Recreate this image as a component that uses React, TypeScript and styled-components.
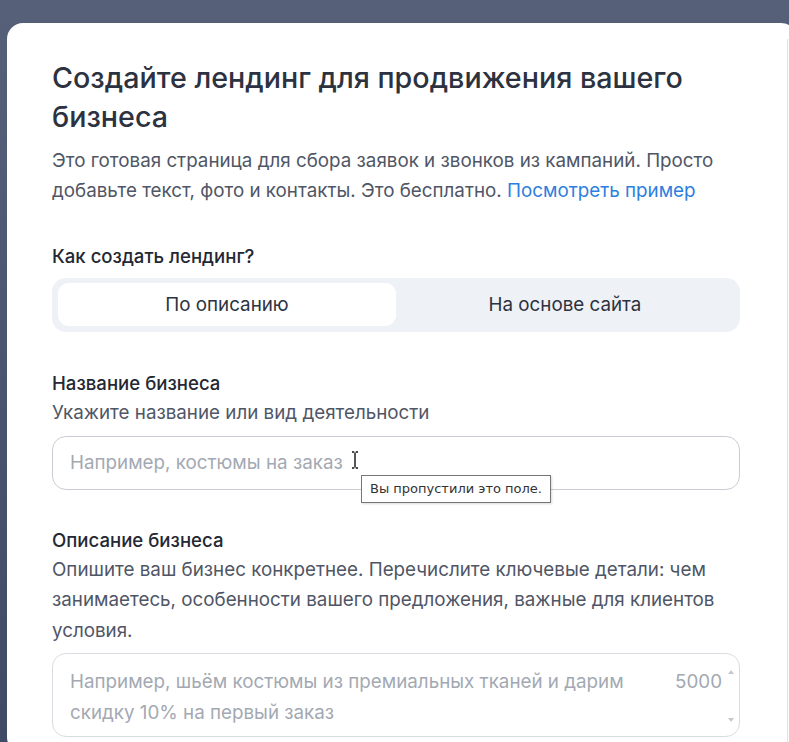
import React from "react";
import styled, { createGlobalStyle } from "styled-components";

const Global = createGlobalStyle`
  html, body { margin: 0; padding: 0; height: 100%; }
  body {
    background: linear-gradient(180deg, #566079 0%, #4c5872 40%, #3f4b64 100%);
    font-family: Inter, "Noto Sans", Arial, sans-serif;
    overflow: hidden;
  }
`;

const Page = styled.div`
  width: 789px;
  height: 742px;
  padding: 23px 0 0 7px;
  box-sizing: border-box;
  overflow: hidden;
`;

const Modal = styled.div`
  position: relative;
  width: 790px;
  height: 730px;
  background: #ffffff;
  border-radius: 16px;
  box-sizing: border-box;
  padding: 35px 0 0 45px;
`;

const ScrollEdge = styled.div`
  position: absolute;
  right: 9px;
  top: 16px;
  bottom: 0;
  width: 1px;
  background: #dfe1e5;
`;

const Content = styled.div`
  width: 688px;
  display: flex;
  flex-direction: column;
`;

const Title = styled.h1`
  margin: 0;
  font-size: 28.7px;
  line-height: 39px;
  font-weight: 500;
  color: #2c3240;
`;

const Lead = styled.p`
  margin: 10px 0 0;
  font-size: 18.8px;
  line-height: 30px;
  color: #4f5665;
`;

const Link = styled.a`
  color: #2d7fdf;
  text-decoration: none;
`;

const Label = styled.div<{ $top: number }>`
  margin-top: ${(p) => p.$top}px;
  font-size: 18.6px;
  line-height: 22px;
  font-weight: 500;
  color: #232833;
`;

const Hint = styled.div`
  margin-top: 4px;
  font-size: 18.8px;
  line-height: 30.5px;
  color: #4f5665;
`;

const Segmented = styled.div`
  margin-top: 11px;
  height: 54px;
  background: #eef1f5;
  border-radius: 14px;
  padding: 6px;
  box-sizing: border-box;
  display: grid;
  grid-template-columns: 338px 1fr;
`;

const Segment = styled.div<{ $active?: boolean }>`
  display: flex;
  align-items: center;
  justify-content: center;
  border-radius: 11px;
  background: ${(p) => (p.$active ? "#ffffff" : "transparent")};
  font-size: 18.8px;
  color: #2c3240;
  height: 43px;
  margin-top: -1px;
`;

const FieldWrap = styled.div`
  position: relative;
  margin-top: 7px;
`;

const Input = styled.div`
  height: 54px;
  border: 1px solid #c9cdd3;
  border-radius: 14px;
  box-sizing: border-box;
  padding: 0 17px;
  display: flex;
  align-items: center;
  font-size: 18.8px;
  color: #a3a9b2;
`;

const Cursor = styled.svg`
  position: absolute;
  left: 299px;
  top: 15px;
`;

const Tooltip = styled.div`
  position: absolute;
  left: 309px;
  top: 39px;
  height: 28px;
  padding: 0 8px;
  box-sizing: border-box;
  border: 1px solid #767676;
  background: #ffffff;
  display: flex;
  align-items: center;
  font-family: "DejaVu Sans", "Liberation Sans", sans-serif;
  font-size: 13px;
  color: #333333;
  box-shadow: 1px 1px 2px rgba(0, 0, 0, 0.15);
  white-space: nowrap;
`;

const TextArea = styled.div`
  position: relative;
  margin-top: 7px;
  height: 84px;
  border: 1px solid #d9dce1;
  border-radius: 14px;
  box-sizing: border-box;
  padding: 12px 90px 0 17px;
  font-size: 18.8px;
  line-height: 31px;
  color: #a3a9b2;
`;

const Counter = styled.span`
  position: absolute;
  right: 17px;
  top: 12px;
  font-size: 18.8px;
  line-height: 31px;
  color: #a3a9b2;
`;

const Arrow = styled.div<{ $down?: boolean }>`
  position: absolute;
  right: 5px;
  ${(p) => (p.$down ? "bottom: 14px;" : "top: 16px;")}
  width: 0;
  height: 0;
  border-left: 3px solid transparent;
  border-right: 3px solid transparent;
  ${(p) =>
    p.$down ? "border-top: 4px solid #c5c9cf;" : "border-bottom: 4px solid #c5c9cf;"}
`;

export default function App() {
  return (
    <Page>
      <Global />
      <Modal>
        <ScrollEdge />
        <Content>
          <Title>Создайте лендинг для продвижения вашего бизнеса</Title>
          <Lead>
            Это готовая страница для сбора заявок и звонков из кампаний. Просто
            добавьте текст, фото и контакты. Это бесплатно.{" "}
            <Link href="#">Посмотреть пример</Link>
          </Lead>

          <Label $top={39}>Как создать лендинг?</Label>
          <Segmented>
            <Segment $active>По описанию</Segment>
            <Segment>На основе сайта</Segment>
          </Segmented>

          <Label $top={40}>Название бизнеса</Label>
          <Hint>Укажите название или вид деятельности</Hint>
          <FieldWrap>
            <Input>Например, костюмы на заказ</Input>
            <Cursor width="8" height="18" viewBox="0 0 8 18">
              <path
                d="M1 1h2.2M4.8 1H7M4 1.5v15M1 17h2.2M4.8 17H7"
                stroke="#111"
                strokeWidth="1.4"
                fill="none"
              />
            </Cursor>
            <Tooltip>Вы пропустили это поле.</Tooltip>
          </FieldWrap>

          <Label $top={39}>Описание бизнеса</Label>
          <Hint>
            Опишите ваш бизнес конкретнее. Перечислите ключевые детали: чем
            занимаетесь, особенности вашего предложения, важные для клиентов
            условия.
          </Hint>
          <TextArea>
            Например, шьём костюмы из премиальных тканей и дарим скидку 10% на
            первый заказ
            <Counter>5000</Counter>
            <Arrow />
            <Arrow $down />
          </TextArea>
        </Content>
      </Modal>
    </Page>
  );
}
